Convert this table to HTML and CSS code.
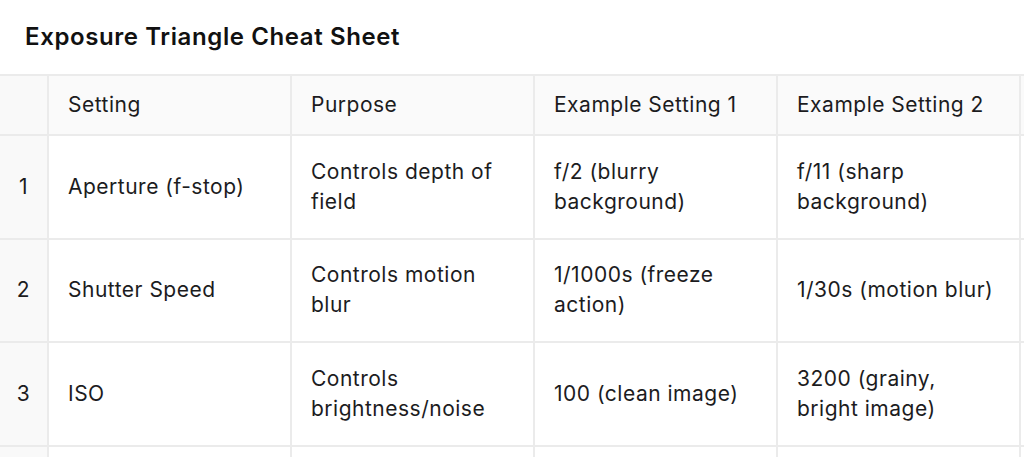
FILE: index.html
```html
<!DOCTYPE html>
<html>
<head>
<meta charset="utf-8">
<link rel="stylesheet" href="styles.css">
</head>
<body>
<div class="page">
  <h1 class="title">Exposure Triangle Cheat Sheet</h1>
  <div class="table-wrap">
    <table class="sheet">
      <colgroup>
        <col class="c-idx">
        <col class="c-main">
        <col class="c-main">
        <col class="c-main">
        <col class="c-main">
        <col class="c-main">
      </colgroup>
      <thead>
        <tr>
          <th class="idx"></th>
          <th>Setting</th>
          <th>Purpose</th>
          <th>Example Setting 1</th>
          <th>Example Setting 2</th>
          <th></th>
        </tr>
      </thead>
      <tbody>
        <tr>
          <td class="idx">1</td>
          <td>Aperture (f-stop)</td>
          <td>Controls depth of field</td>
          <td>f/2 (blurry background)</td>
          <td>f/11 (sharp background)</td>
          <td></td>
        </tr>
        <tr>
          <td class="idx">2</td>
          <td>Shutter Speed</td>
          <td>Controls motion blur</td>
          <td>1/1000s (freeze action)</td>
          <td>1/30s (motion blur)</td>
          <td></td>
        </tr>
        <tr>
          <td class="idx">3</td>
          <td>ISO</td>
          <td>Controls brightness/noise</td>
          <td>100 (clean image)</td>
          <td>3200 (grainy, bright image)</td>
          <td></td>
        </tr>
        <tr>
          <td class="idx"></td>
          <td></td>
          <td></td>
          <td></td>
          <td></td>
          <td></td>
        </tr>
      </tbody>
    </table>
  </div>
</div>
</body>
</html>
```

FILE: styles.css
```css
html, body {
  margin: 0;
  padding: 0;
  background: #ffffff;
  overflow: hidden;
}

body {
  font-family: Inter, "Noto Sans", "Liberation Sans", sans-serif;
  color: #1c1c1e;
}

.page {
  width: 1024px;
  height: 457px;
  overflow: hidden;
}

.title {
  margin: 0;
  padding: 22px 0 0 25px;
  font-size: 24px;
  line-height: 30px;
  font-weight: 600;
  letter-spacing: 0.6px;
  color: #111111;
}

.table-wrap {
  margin-top: 22px;
  margin-left: -2px;
}

.sheet {
  border-collapse: collapse;
  table-layout: fixed;
  width: 1265px;
  font-size: 21px;
  letter-spacing: 0.5px;
  line-height: 30px;
}

.c-idx { width: 49px; }
.c-main { width: 243px; }

.sheet th,
.sheet td {
  border: 2px solid #ebebeb;
  padding: 0 25px 0 19px;
  text-align: left;
  vertical-align: middle;
  font-weight: 400;
}

.sheet thead th {
  height: 60px;
  background: #fafafa;
  box-sizing: border-box;
}

.sheet tbody td {
  height: 103.5px;
  box-sizing: border-box;
}

.sheet .idx {
  background: #f9f9f9;
  text-align: center;
  padding: 0;
}
```
